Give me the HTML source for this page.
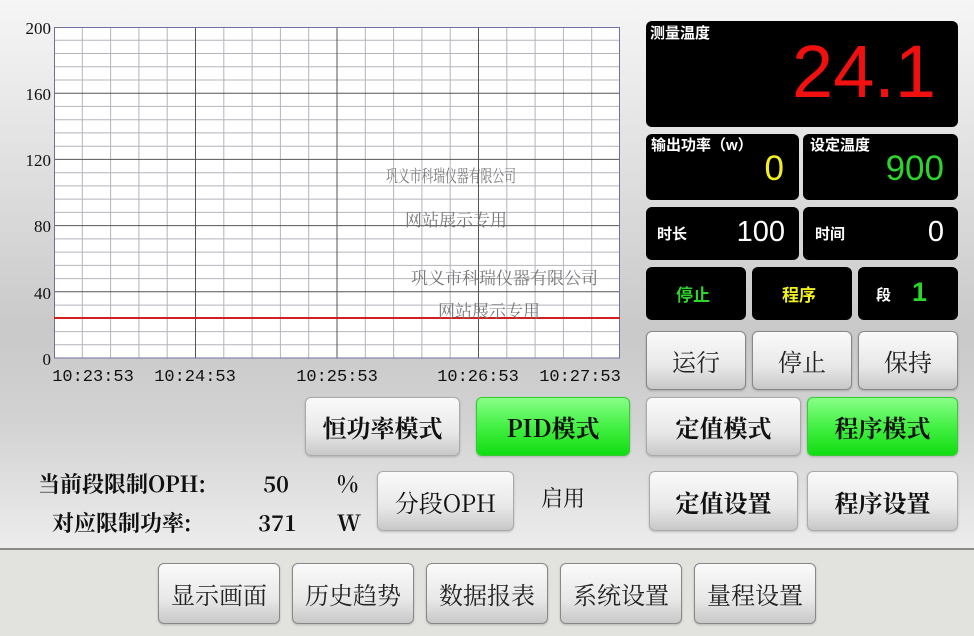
<!DOCTYPE html>
<html><head><meta charset="utf-8"><style>
*{margin:0;padding:0;box-sizing:border-box}
body{width:974px;height:636px;overflow:hidden;position:relative;font-family:"Liberation Serif","Noto Serif CJK SC",serif;background:linear-gradient(#f6f6f6 0px,#e6e6e6 120px,#c9c9c9 330px,#d2d2d2 420px,#ececec 545px)}
.p{position:absolute;background:#000;border-radius:6px;color:#fff}
.lb{position:absolute;font-family:"Liberation Sans","Noto Sans CJK SC",sans-serif;font-weight:bold;font-size:15px;color:#fff}
.num{position:absolute;font-family:"Liberation Sans",sans-serif;right:12px}
.b{position:absolute;border-radius:6px;border:1px solid #aaa;background:linear-gradient(#fafafa,#e8e8e8 60%,#c8c8c8);font-size:24px;font-weight:bold;color:#111;display:flex;align-items:center;justify-content:center;font-family:"Noto Serif CJK SC",serif;box-shadow:0 1px 2px rgba(0,0,0,.2)}
.g{background:linear-gradient(#88ff88,#44f044 50%,#11dd11);border-color:#3c3}
.t{position:absolute;font-size:22px;color:#111;font-family:"Noto Serif CJK SC",serif;font-weight:bold;white-space:nowrap}
.bot{position:absolute;left:0;top:548px;width:974px;height:88px;background:#e2e2de;border-top:2px solid #8a8a8a}
.bb{font-weight:normal;color:#222;border-color:#888}
</style></head><body>
<svg style="position:absolute;left:0;top:0" width="640" height="400">
<rect x="54" y="27" width="566" height="331" fill="#fff"/>
<g stroke="#b4b4bc" stroke-width="1">
<path d="M82.3 27V358M110.6 27V358M138.9 27V358M167.2 27V358M223.8 27V358M252.1 27V358M280.4 27V358M308.7 27V358M365.3 27V358M393.6 27V358M421.9 27V358M450.2 27V358M506.8 27V358M535.1 27V358M563.4 27V358M591.7 27V358"/>
<path d="M54 40.2H620M54 53.5H620M54 66.7H620M54 80H620M54 106.4H620M54 119.7H620M54 132.9H620M54 146.2H620M54 172.7H620M54 185.9H620M54 199.1H620M54 212.4H620M54 238.9H620M54 252.1H620M54 265.4H620M54 278.6H620M54 305.1H620M54 318.3H620M54 331.6H620M54 344.8H620"/>
</g>
<g stroke="#555" stroke-width="1">
<path d="M195.5 27V358M337 27V358M478.5 27V358M54 93.2H620M54 159.4H620M54 225.6H620M54 291.8H620"/>
</g>
<rect x="54.5" y="27.5" width="565" height="330.5" fill="none" stroke="#7070a0"/>
<line x1="54" y1="318" x2="620" y2="318" stroke="#d02020" stroke-width="2"/>
<g font-family="Liberation Serif,serif" font-size="17" fill="#111" text-anchor="end">
<text x="51" y="34">200</text><text x="51" y="100">160</text><text x="51" y="166">120</text><text x="51" y="232">80</text><text x="51" y="299">40</text><text x="51" y="365">0</text>
</g>
<g font-family="Liberation Mono,monospace" font-size="17" fill="#111" text-anchor="middle">
<text x="93" y="381">10:23:53</text><text x="195" y="381">10:24:53</text><text x="337" y="381">10:25:53</text><text x="478" y="381">10:26:53</text><text x="580" y="381">10:27:53</text>
</g>
<g font-family="Noto Serif CJK SC,serif" font-size="17" fill="#777">
<text x="386" y="182" textLength="130" lengthAdjust="spacingAndGlyphs">巩义市科瑞仪器有限公司</text><text x="405" y="226">网站展示专用</text>
<text x="411" y="284">巩义市科瑞仪器有限公司</text><text x="438" y="317">网站展示专用</text>
</g>
</svg>
<div class="p" style="left:646px;top:21px;width:312px;height:106px"><div class="lb" style="left:4px;top:1px">测量温度</div><div class="num" style="right:22px;top:14px;font-size:74px;color:#f01010;line-height:1">24.1</div></div>
<div class="p" style="left:646px;top:134px;width:153px;height:66px"><div class="lb" style="left:5px;top:0">输出功率（w）</div><div class="num" style="top:17px;font-size:35px;color:#f0f020;line-height:1;right:15px">0</div></div>
<div class="p" style="left:803px;top:134px;width:155px;height:66px"><div class="lb" style="left:7px;top:0">设定温度</div><div class="num" style="top:17px;font-size:35px;color:#2cd42c;line-height:1;right:14px">900</div></div>
<div class="p" style="left:646px;top:207px;width:153px;height:53px"><div class="lb" style="left:11px;top:16px">时长</div><div class="num" style="top:11px;font-size:29px;line-height:1;right:14px">100</div></div>
<div class="p" style="left:803px;top:207px;width:155px;height:53px"><div class="lb" style="left:12px;top:16px">时间</div><div class="num" style="top:11px;font-size:29px;line-height:1;right:14px">0</div></div>
<div class="p" style="left:646px;top:267px;width:100px;height:53px"><div class="lb" style="left:30px;top:14px;color:#2cd42c;font-size:17px">停止</div></div>
<div class="p" style="left:752px;top:267px;width:100px;height:53px"><div class="lb" style="left:30px;top:14px;color:#f0f020;font-size:17px">程序</div></div>
<div class="p" style="left:858px;top:267px;width:100px;height:53px"><div class="lb" style="left:18px;top:17px">段</div><div class="num" style="left:54px;top:12px;font-size:27px;font-weight:bold;color:#2cd42c;line-height:1">1</div></div>
<div class="b bb" style="left:646px;top:331px;width:100px;height:59px">运行</div>
<div class="b bb" style="left:752px;top:331px;width:100px;height:59px">停止</div>
<div class="b bb" style="left:858px;top:331px;width:100px;height:59px">保持</div>
<div class="b" style="left:305px;top:397px;width:155px;height:59px">恒功率模式</div>
<div class="b g" style="left:476px;top:397px;width:154px;height:59px">PID模式</div>
<div class="b" style="left:646px;top:397px;width:155px;height:59px">定值模式</div>
<div class="b g" style="left:807px;top:397px;width:151px;height:59px">程序模式</div>
<div class="b" style="left:377px;top:471px;width:137px;height:60px;font-weight:normal">分段OPH</div>
<div class="b" style="left:649px;top:471px;width:149px;height:60px">定值设置</div>
<div class="b" style="left:807px;top:471px;width:151px;height:60px">程序设置</div>
<div class="t" style="left:38px;top:468px">当前段限制OPH:</div>
<div class="t" style="left:263px;top:468px">50</div>
<div class="t" style="left:337px;top:468px">%</div>
<div class="t" style="left:52px;top:507px">对应限制功率:</div>
<div class="t" style="left:258px;top:507px">371</div>
<div class="t" style="left:337px;top:507px">W</div>
<div class="t" style="left:541px;top:482px;font-weight:normal">启用</div>
<div class="bot"></div>
<div class="b bb" style="left:158px;top:563px;width:122px;height:61px">显示画面</div>
<div class="b bb" style="left:292px;top:563px;width:122px;height:61px">历史趋势</div>
<div class="b bb" style="left:426px;top:563px;width:122px;height:61px">数据报表</div>
<div class="b bb" style="left:560px;top:563px;width:122px;height:61px">系统设置</div>
<div class="b bb" style="left:694px;top:563px;width:122px;height:61px">量程设置</div>
</body></html>
